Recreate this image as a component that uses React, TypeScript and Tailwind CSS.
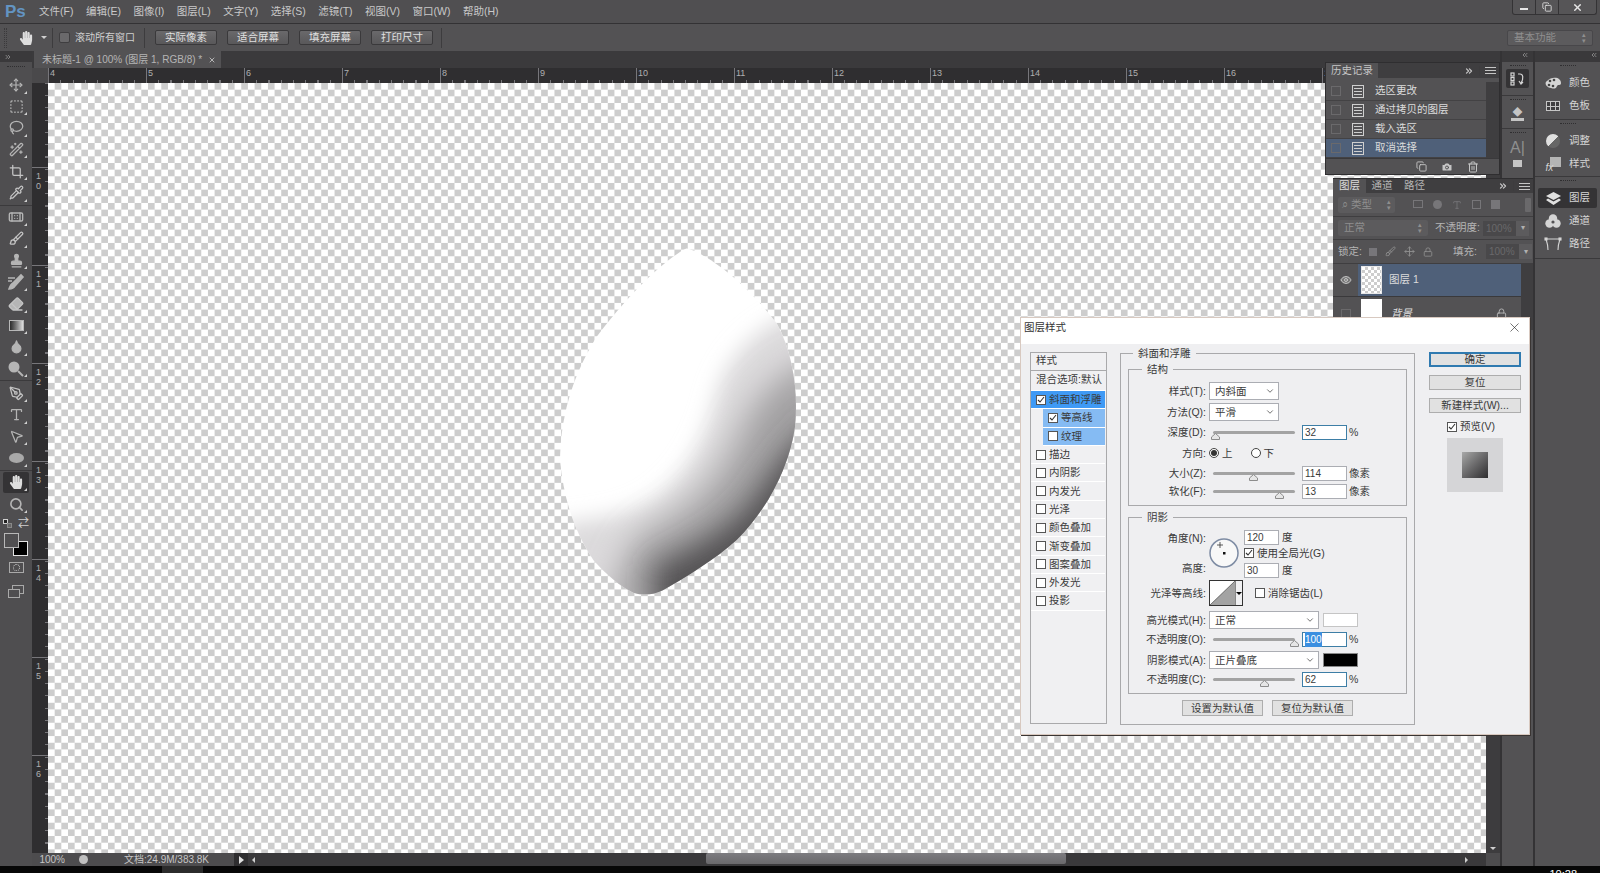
import {
  Bandage,
  Brush,
  Camera,
  ChevronDown,
  ChevronsLeft,
  ChevronsRight,
  Copy,
  Crop,
  Droplet,
  Eraser,
  Eye,
  Lasso,
  Lock,
  MousePointer2,
  Move,
  PenTool,
  Pipette,
  Search,
  SquareDashed,
  Stamp,
  Trash2,
  Type,
  WandSparkles,
  X,
} from "lucide-react";
import { FaHandPaper } from "react-icons/fa";
import type { ReactNode } from "react";

const menus = ["文件(F)", "编辑(E)", "图像(I)", "图层(L)", "文字(Y)", "选择(S)", "滤镜(T)", "视图(V)", "窗口(W)", "帮助(H)"];
const optionButtons = ["实际像素", "适合屏幕", "填充屏幕", "打印尺寸"];
const hRuler = ["4", "5", "6", "7", "8", "9", "10", "11", "12", "13", "14", "15", "16", "17", "18"];
const vRuler = ["10", "11", "12", "13", "14", "15", "16"];
const historyRows = ["选区更改", "通过拷贝的图层", "载入选区", "取消选择"];
const checkerboard =
  "bg-[conic-gradient(#cdcdcd_25%,#ffffff_0_50%,#cdcdcd_0_75%,#ffffff_0)] bg-[length:13.34px_13.34px]";

function Dodge() {
  return (
    <svg width="18" height="18" viewBox="0 0 18 18">
      <circle cx="7" cy="7" r="5.5" fill="#b5b5b5" />
      <path d="M11 11l5 5" stroke="#b5b5b5" strokeWidth="2" />
    </svg>
  );
}

function HistoryBrush() {
  return (
    <svg width="18" height="18" viewBox="0 0 18 18" fill="none" stroke="#b5b5b5" strokeWidth="1.6">
      <path d="M2 16c3 0 5-1 6-3l8-9-2-2-8 8c-2 1-3 3-4 6z" fill="#b5b5b5" />
      <path d="M1 5h7M1 8h4" />
    </svg>
  );
}

function Gradient() {
  return <div className="h-[11px] w-[15px] border border-[#b8b8b8] bg-gradient-to-r from-[#2b2b2b] to-[#e0e0e0]" />;
}

function Shape() {
  return <div className="h-[10px] w-[15px] rounded-[50%] bg-[#a9a9a9]" />;
}

function HistoryDoc() {
  return (
    <svg width="12" height="13" viewBox="0 0 12 13" fill="none" stroke="#cfcfcf">
      <rect x=".5" y=".5" width="11" height="12" />
      <path d="M2 3.5h8M2 6.5h8M2 9.5h8" />
    </svg>
  );
}

type Tool = { icon: ReactNode; active?: boolean; rule?: boolean };

const tools: Tool[] = [
  { icon: <Move size={14} color="#b5b5b5" /> },
  { icon: <SquareDashed size={15} color="#b5b5b5" /> },
  { icon: <Lasso size={15} color="#b5b5b5" /> },
  { icon: <WandSparkles size={15} color="#b5b5b5" /> },
  { icon: <Crop size={15} color="#c5c5c5" /> },
  { icon: <Pipette size={15} color="#c5c5c5" />, rule: true },
  { icon: <Bandage size={16} color="#b5b5b5" /> },
  { icon: <Brush size={15} color="#c5c5c5" /> },
  { icon: <Stamp size={15} color="#b5b5b5" fill="#b5b5b5" /> },
  { icon: <HistoryBrush /> },
  { icon: <Eraser size={16} color="#c5c5c5" fill="#b5b5b5" /> },
  { icon: <Gradient /> },
  { icon: <Droplet size={15} color="#b5b5b5" fill="#b5b5b5" /> },
  { icon: <Dodge />, rule: true },
  { icon: <PenTool size={15} color="#c5c5c5" /> },
  { icon: <Type size={15} color="#b5b5b5" /> },
  { icon: <MousePointer2 size={15} color="#b5b5b5" fill="#444" /> },
  { icon: <Shape />, rule: true },
  { icon: <FaHandPaper size={14} color="#dedede" />, active: true },
  { icon: <Search size={15} color="#b5b5b5" strokeWidth={2.6} /> },
];

function MenuBar() {
  return (
    <div className="flex h-[23px] items-center bg-[#504f51]">
      <span className="ml-[5px] w-[34px] text-[17px] font-bold leading-none text-[#6394c2]">Ps</span>
      <div className="flex gap-[12.5px] text-[10.5px] text-[#c9c9c9]">
        {menus.map((m) => (
          <span key={m}>{m}</span>
        ))}
      </div>
      <div className="ml-auto mr-[3px] flex h-[15px] w-[85px] self-start rounded-b-[3px] border border-t-0 border-[#343335] bg-[#565557] text-[#e6e6e6]">
        <div className="flex w-[23px] items-center justify-center border-r border-[#343335]">
          <div className="mt-[3px] h-[2px] w-[8px] bg-[#e6e6e6]" />
        </div>
        <div className="flex w-[23px] items-center justify-center border-r border-[#343335]">
          <Copy size={10} strokeWidth={2} />
        </div>
        <div className="flex flex-1 items-center justify-center">
          <X size={11} strokeWidth={3} />
        </div>
      </div>
    </div>
  );
}

function OptionsBar() {
  return (
    <div className="flex h-[28px] items-center border-t border-[#333234] bg-[#535254] text-[10.5px] text-[#d0d0d0]">
      <div className="ml-[4px] h-[20px] w-[3px] border-x border-dotted border-[#3a393b]" />
      <FaHandPaper size={14} color="#dedede" className="ml-[12px]" />
      <div className="ml-[8px] h-0 w-0 border-x-[3px] border-t-[3px] border-x-transparent border-t-[#cfcfcf]" />
      <div className="ml-[5px] h-[20px] w-px bg-[#3d3c3e]" />
      <div className="ml-[6px] h-[11px] w-[11px] rounded-[2px] border border-[#3f3e40] bg-[#6a696b]" />
      <span className="ml-[5px] w-[69px] whitespace-nowrap text-[10px]">滚动所有窗口</span>
      <div className="h-[20px] w-px bg-[#3d3c3e]" />
      <div className="ml-[10px] flex gap-[10px]">
        {optionButtons.map((b) => (
          <div
            key={b}
            className="flex h-[15px] w-[62px] items-center justify-center rounded-[2px] border border-[#3a393b] bg-gradient-to-b from-[#6a696b] to-[#59585a] text-[#e0e0e0]"
          >
            {b}
          </div>
        ))}
      </div>
      <div className="ml-[8px] h-[20px] w-px bg-[#3d3c3e]" />
      <div className="ml-auto mr-[7px] flex h-[16px] w-[86px] items-center justify-between rounded-[2px] border border-[#48474a] bg-[#5c5b5d] px-[6px] text-[10.5px] text-[#8f8f8f]">
        基本功能
        <span className="text-[7px] leading-[6px]">
          ▴
          <br />▾
        </span>
      </div>
    </div>
  );
}

function Toolbar() {
  return (
    <div className="flex w-[32px] shrink-0 flex-col bg-[#4f4e50]">
      <div className="flex h-[11px] items-center bg-[#3a393b] pl-[4px] text-[#a9a9a9]">
        <ChevronsRight size={8} />
      </div>
      <div className="mx-auto mt-[4px] h-[2px] w-[18px] border-t border-dotted border-[#2f2e30]" />
      <div className="mt-[6px] flex flex-col">
        {tools.map((t, i) => (
          <div key={i}>
            <div
              className={`relative mx-[3px] flex h-[21.6px] items-center justify-center rounded-[2px] ${
                t.active ? "bg-[#343335]" : ""
              }`}
            >
              {t.icon}
              <div className="absolute bottom-[2px] right-[2px] h-0 w-0 border-b-[3px] border-l-[3px] border-b-[#d0d0d0] border-l-transparent" />
            </div>
            {t.rule && <div className="my-px h-px bg-[#3b3a3c]" />}
          </div>
        ))}
      </div>
      <div className="relative mt-[3px] h-[42px]">
        <div className="absolute left-[3px] top-[1px] h-[5px] w-[5px] border border-[#d0d0d0] bg-[#222]" />
        <div className="absolute left-[7px] top-[5px] h-[5px] w-[5px] border border-[#888] bg-[#666]" />
        <span className="absolute left-[18px] top-0 text-[11px] leading-[11px] text-[#d0d0d0]">⇄</span>
        <div className="absolute left-[13px] top-[23px] h-[15px] w-[15px] border border-[#e4e4e4] bg-black" />
        <div className="absolute left-[4px] top-[15px] h-[15px] w-[15px] border border-[#b8b8b8] bg-[#504f51]" />
      </div>
      <div className="mx-auto mt-[2px] flex h-[11px] w-[15px] items-center justify-center border border-[#a9a9a9]">
        <div className="h-[7px] w-[7px] rounded-full border border-dotted border-[#c5c5c5]" />
      </div>
      <div className="relative mx-auto mt-[12px] h-[13px] w-[16px]">
        <div className="absolute right-0 top-0 h-[9px] w-[12px] border border-[#a9a9a9]" />
        <div className="absolute bottom-0 left-0 h-[9px] w-[12px] border border-[#a9a9a9] bg-[#4f4e50]" />
      </div>
    </div>
  );
}

function Petal() {
  return (
    <svg width="280" height="380" viewBox="0 0 840 1140" className="block">
      <defs>
        <clipPath id="petal">
          <path d="M470 55 C530 70 650 160 740 280 C790 370 805 490 795 590 C780 700 720 830 620 930 C560 985 470 1040 400 1080 C370 1095 340 1098 310 1088 C270 1070 225 1030 190 990 C130 900 100 800 90 690 C92 570 120 450 200 320 C290 200 400 90 470 55 Z" />
        </clipPath>
        <filter id="soft" x="-30%" y="-30%" width="160%" height="160%">
          <feGaussianBlur stdDeviation="32" />
        </filter>
        <filter id="softer" x="-30%" y="-30%" width="160%" height="160%">
          <feGaussianBlur stdDeviation="48" />
        </filter>
        <filter id="softest" x="-30%" y="-30%" width="160%" height="160%">
          <feGaussianBlur stdDeviation="42" />
        </filter>
      </defs>
      <g clipPath="url(#petal)">
        <rect width="840" height="1140" fill="#ffffff" />
        <path
          d="M790 250 C670 300 590 390 560 490 C530 620 470 750 350 820 C280 855 200 870 90 880 L120 1180 L900 1180 L900 250 Z"
          fill="#dcdadc"
          filter="url(#soft)"
        />
        <path
          d="M880 380 C770 410 680 490 630 610 C580 730 500 830 380 890 C320 920 280 960 240 1150 L900 1180 Z"
          fill="#a3a1a3"
          filter="url(#softer)"
        />
        <path
          d="M880 560 C800 620 740 700 680 790 C610 890 510 940 370 1010 L370 1180 L900 1180 Z"
          fill="#545254"
          filter="url(#softest)"
        />
      </g>
    </svg>
  );
}

function DocArea() {
  return (
    <div className="flex min-w-0 flex-1 flex-col">
      <div className="flex h-[17px] items-end bg-[#3b3a3c] pl-[2px]">
        <div className="flex h-[17px] w-[187px] items-center justify-between whitespace-nowrap bg-[#535254] pl-[8px] pr-[5px] text-[10px] text-[#b5b5b5]">
          未标题-1 @ 100% (图层 1, RGB/8) *
          <X size={8} strokeWidth={3} />
        </div>
      </div>
      <div className="flex h-[15px] bg-[#2f2e30]">
        <div className="h-[15px] w-[16px] shrink-0 bg-[#4a494b]" />
        <div className="flex flex-1 overflow-hidden bg-[repeating-linear-gradient(90deg,#77767a_0_1px,transparent_1px_12.25px)] bg-[length:100%_3px] bg-bottom bg-no-repeat">
          {hRuler.map((n) => (
            <div key={n} className="h-[15px] w-[98px] shrink-0 border-l border-[#77767a] pl-px text-[9px] leading-[11px] text-[#b0b0b0]">
              {n}
            </div>
          ))}
        </div>
      </div>
      <div className="flex min-h-0 flex-1">
        <div className="flex w-[16px] shrink-0 flex-col overflow-hidden bg-[#2f2e30] bg-[repeating-linear-gradient(180deg,#77767a_0_1px,transparent_1px_12.25px)] bg-[length:3px_100%] bg-right bg-no-repeat">
          <div className="h-[84px] shrink-0" />
          {vRuler.map((n) => (
            <div key={n} className="h-[98px] shrink-0 border-t border-[#77767a] pl-[4px] pt-[3px] text-[9px] leading-[10px] text-[#b0b0b0]">
              {n.split("").map((c, i) => (
                <div key={i}>{c}</div>
              ))}
            </div>
          ))}
        </div>
        <div className={`flex min-w-0 flex-1 ${checkerboard}`}>
          <div className="ml-[482px] mt-[147px] h-fit">
            <Petal />
          </div>
        </div>
        <div className="flex w-[14px] shrink-0 flex-col justify-end bg-[#3d3c3e] pb-[3px]">
          <div className="mx-auto h-0 w-0 border-x-[3px] border-t-[3px] border-x-transparent border-t-[#d0d0d0]" />
        </div>
      </div>
      <StatusBar />
    </div>
  );
}

function StatusBar() {
  return (
    <div className="flex h-[13px] items-center whitespace-nowrap bg-[#3a393b] text-[10px] text-[#c5c5c5]">
      <div className="flex h-full w-[33px] items-center justify-end bg-[#4d4c4e]">100%</div>
      <div className="flex h-full w-[24px] items-center justify-end bg-[#4d4c4e] pr-px">
        <div className="h-[9px] w-[9px] rounded-full bg-[#c0c0c0]" />
      </div>
      <div className="flex h-full w-[145px] items-center bg-[#4d4c4e] pl-[35px]">文档:24.9M/383.8K</div>
      <div className="flex h-full w-[14px] items-center justify-center bg-[#2f2e30]">
        <div className="h-0 w-0 border-y-[4px] border-l-[5px] border-y-transparent border-l-[#e0e0e0]" />
      </div>
      <div className="ml-[4px] h-0 w-0 border-y-[3px] border-r-[3px] border-y-transparent border-r-[#d0d0d0]" />
      <div className="ml-[451px] h-[11px] w-[360px] self-start rounded-[2px] bg-gradient-to-b from-[#7d7c80] to-[#6a696c]" />
      <div className="ml-auto mr-[18px] h-0 w-0 border-y-[3px] border-l-[3px] border-y-transparent border-l-[#d0d0d0]" />
      <div className="h-full w-[14px] bg-[#4d4c4e]" />
    </div>
  );
}

function HistoryStripIcon() {
  return (
    <svg width="16" height="14" viewBox="0 0 16 14" fill="none" stroke="#d5d5d5" strokeWidth="1.2">
      <rect x="1" y="1" width="3" height="3" />
      <rect x="1" y="5.5" width="3" height="3" />
      <rect x="1" y="10" width="3" height="3" />
      <path d="M8 2h2c3 0 4 4 1 9M9 9l2 3 2-2" />
    </svg>
  );
}

function PanelStrip() {
  return (
    <div className="flex w-[35px] shrink-0 flex-col border-x-2 border-[#343335] bg-[#535254]">
      <div className="flex h-[11px] justify-end bg-[#3a393b] pr-[4px] text-[#a9a9a9]">
        <ChevronsLeft size={8} />
      </div>
      <div className="h-[34px] border-b border-[#3a393b] pt-[3px]">
        <div className="mx-auto mb-[3px] h-px w-[16px] border-t border-dotted border-[#2f2e30]" />
        <div className="mx-[4px] flex h-[19px] items-center justify-center rounded-[2px] bg-[#343335]">
          <HistoryStripIcon />
        </div>
      </div>
      <div className="h-[33px] border-b border-[#3a393b] pt-[3px]">
        <div className="mx-auto mb-[7px] h-px w-[16px] border-t border-dotted border-[#2f2e30]" />
        <div className="mx-auto h-[14px] w-[13px] border-b-[3px] border-[#c5c5c5] text-center text-[10px] leading-[11px] text-[#c5c5c5]">
          ◆
        </div>
      </div>
      <div className="h-[46px] pt-[3px]">
        <div className="mx-auto mb-[6px] h-px w-[16px] border-t border-dotted border-[#2f2e30]" />
        <div className="text-center text-[16px] leading-[18px] text-[#8f8f8f]">A|</div>
        <div className="mx-auto mt-[3px] h-[7px] w-[9px] bg-[#c5c5c5]" />
      </div>
    </div>
  );
}

function Palette() {
  return (
    <svg width="16" height="14" viewBox="0 0 16 14">
      <path d="M8 2c4-1 8 1 8 5 0 3-3 1-4 3-1 3-3 3-6 2C1 11-1 7 2 5c2-2 4-3 6-3z" fill="#d5d5d5" />
      <circle cx="5" cy="5" r="1.3" fill="#444" />
      <circle cx="9" cy="4" r="1.3" fill="#444" />
      <circle cx="4" cy="9" r="1.3" fill="#444" />
      <circle cx="8" cy="10" r="1.3" fill="#444" />
    </svg>
  );
}

function Swatches() {
  return (
    <div className="grid h-[10px] w-[14px] grid-cols-3 gap-px border border-[#c5c5c5] bg-[#c5c5c5]">
      {[0, 1, 2, 3, 4, 5].map((i) => (
        <div key={i} className="bg-[#3f3e40]" />
      ))}
    </div>
  );
}

function Adjust() {
  return <div className="h-[14px] w-[14px] rounded-full bg-[linear-gradient(135deg,#e0e0e0_50%,#666_50%)]" />;
}

function Fx() {
  return (
    <div className="relative h-[14px] w-[15px]">
      <div className="ml-[4px] h-[10px] w-[11px] bg-[#b5b5b5]" />
      <span className="absolute bottom-[-2px] left-0 text-[10px] italic leading-[11px] text-[#d5d5d5]">fx</span>
    </div>
  );
}

function LayersGlyph() {
  return (
    <svg width="15" height="13" viewBox="0 0 15 13" fill="#e0e0e0">
      <path d="M7.5 0L15 4 7.5 8 0 4z" />
      <path d="M2 6.5L7.5 9.5 13 6.5 15 8 7.5 13 0 8z" />
    </svg>
  );
}

function Channels() {
  return (
    <svg width="16" height="14" viewBox="0 0 16 14" fill="#d5d5d5">
      <circle cx="8" cy="4.5" r="4.2" />
      <circle cx="4.5" cy="9.5" r="4.2" />
      <circle cx="11.5" cy="9.5" r="4.2" />
      <circle cx="8" cy="8" r="1.6" fill="#535254" />
    </svg>
  );
}

function Paths() {
  return (
    <svg width="18" height="14" viewBox="0 0 18 14" fill="none" stroke="#d5d5d5" strokeWidth="1.1">
      <path d="M2 2h14M4 13C4 8 3 5 2 2M14 13c0-5 1-8 2-11" />
      <rect x="1" y="1" width="2" height="2" fill="#d5d5d5" />
      <rect x="15" y="1" width="2" height="2" fill="#d5d5d5" />
    </svg>
  );
}

function DockItem({ icon, label, active }: { icon: ReactNode; label: string; active?: boolean }) {
  return (
    <div
      className={`mx-[3px] flex h-[20px] items-center rounded-[2px] pl-[5px] text-[10.5px] text-[#d5d5d5] ${
        active ? "bg-[#343335]" : ""
      }`}
    >
      <div className="flex w-[20px] justify-center">{icon}</div>
      <span className="ml-[6px]">{label}</span>
    </div>
  );
}

function DockGroup({ children, className }: { children: ReactNode; className: string }) {
  return (
    <div className={`flex flex-col gap-[3px] border-b border-[#3a393b] pt-[3px] ${className}`}>
      <div className="mx-auto mb-[4px] h-px w-[16px] border-t border-dotted border-[#2f2e30]" />
      {children}
    </div>
  );
}

function Dock() {
  return (
    <div className="flex w-[65px] shrink-0 flex-col bg-[#535254]">
      <div className="flex h-[11px] justify-end bg-[#3a393b] pr-[2px] text-[#a9a9a9]">
        <ChevronsLeft size={8} />
      </div>
      <DockGroup className="h-[58px]">
        <DockItem icon={<Palette />} label="颜色" />
        <DockItem icon={<Swatches />} label="色板" />
      </DockGroup>
      <DockGroup className="h-[57px]">
        <DockItem icon={<Adjust />} label="调整" />
        <DockItem icon={<Fx />} label="样式" />
      </DockGroup>
      <DockGroup className="h-[82px]">
        <DockItem icon={<LayersGlyph />} label="图层" active />
        <DockItem icon={<Channels />} label="通道" />
        <DockItem icon={<Paths />} label="路径" />
      </DockGroup>
    </div>
  );
}

function PanelMenuIcons() {
  return (
    <div className="ml-auto flex items-center gap-[5px] pr-[3px] text-[#c5c5c5]">
      <ChevronsRight size={10} strokeWidth={3} />
      <div className="h-[10px] w-px bg-[#3d3c3e]" />
      <div className="h-[7px] w-[11px] border-y border-[#c5c5c5] bg-[linear-gradient(#c5c5c5,#c5c5c5)] bg-[length:100%_1px] bg-center bg-no-repeat" />
    </div>
  );
}

function HistoryPanel() {
  return (
    <div className="absolute left-[1325px] top-[62px] flex h-[113px] w-[175px] flex-col border border-[#2f2e30] bg-[#535254] text-[10.5px] text-[#dcdcdc]">
      <div className="flex h-[15px] shrink-0 bg-[#3f3e40]">
        <div className="flex w-[52px] items-center justify-center bg-[#535254] text-[#c5c5c5]">历史记录</div>
        <PanelMenuIcons />
      </div>
      <div className="flex flex-1 pt-[4px]">
        <div className="flex flex-1 flex-col">
          {historyRows.map((r, i) => (
            <div
              key={r}
              className={`flex h-[19px] items-center border-b border-[#434244] ${i === 3 ? "bg-[#4f6079]" : ""}`}
            >
              <div className="ml-[5px] h-[10px] w-[10px] border border-[#6a696b]" />
              <div className="ml-[11px] flex">
                <HistoryDoc />
              </div>
              <span className="ml-[11px]">{r}</span>
            </div>
          ))}
        </div>
        <div className="w-[13px] bg-[#3f3e40]" />
      </div>
      <div className="flex h-[16px] shrink-0 items-center gap-[14px] border-t border-[#3a393b] pl-[90px] text-[#c5c5c5]">
        <Copy size={11} />
        <Camera size={12} fill="#c5c5c5" color="#535254" />
        <Trash2 size={12} />
      </div>
    </div>
  );
}

function LayersPanel() {
  return (
    <div className="absolute left-[1333px] top-[178px] flex w-[200px] flex-col border-t border-[#2f2e30] bg-[#535254] text-[10.5px] text-[#b5b5b5]">
      <div className="flex h-[14px] bg-[#3f3e40]">
        <div className="flex w-[33px] items-center justify-center bg-[#535254] text-[#dcdcdc]">图层</div>
        <div className="flex w-[32px] items-center justify-center">通道</div>
        <div className="flex w-[33px] items-center justify-center">路径</div>
        <PanelMenuIcons />
      </div>
      <div className="flex h-[24px] items-center border-b border-[#3f3e40] pl-[5px] text-[#8f8f8f]">
        <div className="flex h-[16px] w-[57px] items-center justify-between rounded-[2px] bg-[#5c5b5d] px-[4px]">
          <span>⌕ 类型</span>
          <span className="text-[7px] leading-[6px]">
            ▴
            <br />▾
          </span>
        </div>
        <div className="ml-[18px] flex gap-[10px] text-[#777679]">
          <div className="h-[8px] w-[10px] border border-[#777679]" />
          <div className="h-[9px] w-[9px] rounded-full bg-[#777679]" />
          <Type size={10} />
          <div className="h-[9px] w-[9px] border border-[#777679]" />
          <div className="h-[9px] w-[9px] bg-[#777679]" />
        </div>
        <div className="ml-auto mr-[2px] h-[14px] w-[6px] rounded-[1px] bg-[#6a696b]" />
      </div>
      <div className="flex h-[23px] items-center border-b border-[#3f3e40] pl-[5px]">
        <div className="flex h-[16px] w-[90px] items-center justify-between rounded-[2px] bg-[#5c5b5d] px-[6px] text-[#8f8f8f]">
          正常
          <span className="text-[7px] leading-[6px]">
            ▴
            <br />▾
          </span>
        </div>
        <span className="ml-[7px] w-[48px] whitespace-nowrap">不透明度:</span>
        <div className="flex h-[15px] w-[46px] items-center justify-between bg-[#49484a] pl-[3px] text-[10px] text-[#6a696b]">
          100%
          <div className="flex h-full w-[13px] items-center justify-center bg-[#5c5b5d] text-[8px] text-[#b0b0b0]">▾</div>
        </div>
      </div>
      <div className="flex h-[24px] items-center border-b border-[#3f3e40] pl-[5px]">
        <span className="w-[31px] whitespace-nowrap">锁定:</span>
        <div className="flex items-center gap-[8px] text-[#8f8f8f]">
          <div className="h-[8px] w-[8px] bg-[#77767a]" />
          <Brush size={11} />
          <Move size={11} />
          <Lock size={10} />
        </div>
        <span className="ml-[20px] w-[33px] whitespace-nowrap">填充:</span>
        <div className="flex h-[15px] w-[46px] items-center justify-between bg-[#49484a] pl-[3px] text-[10px] text-[#6a696b]">
          100%
          <div className="flex h-full w-[13px] items-center justify-center bg-[#5c5b5d] text-[8px] text-[#b0b0b0]">▾</div>
        </div>
      </div>
      <div className="flex">
        <div className="flex-1">
          <div className="flex h-[33px] items-center border-b border-[#3a393b]">
            <div className="flex h-full w-[25px] items-center justify-center">
              <Eye size={12} color="#c5c5c5" fill="#777" />
            </div>
            <div className="flex h-full flex-1 items-center bg-[#4f6079] pl-[3px] text-[#dcdcdc]">
              <div className="h-[28px] w-[21px] border border-[#e8e8e8] bg-[conic-gradient(#cdcdcd_25%,#ffffff_0_50%,#cdcdcd_0_75%,#ffffff_0)] bg-[length:6px_6px]" />
              <span className="ml-[7px]">图层 1</span>
            </div>
          </div>
          <div className="flex h-[33px] items-center">
            <div className="ml-[8px] h-[10px] w-[10px] border border-[#6a696b]" />
            <div className="ml-[10px] h-[30px] w-[21px] bg-white" />
            <span className="ml-[9px] italic text-[#e0e0e0]">背景</span>
            <Lock size={11} className="ml-auto mr-[14px]" />
          </div>
        </div>
        <div className="w-[12px] bg-[#3f3e40]" />
      </div>
    </div>
  );
}

function Check({ checked }: { checked?: boolean }) {
  return (
    <div className="flex h-[10px] w-[10px] shrink-0 items-center justify-center border border-[#555] bg-white">
      {checked && (
        <svg width="8" height="8" viewBox="0 0 8 8" fill="none" stroke="#333" strokeWidth="1.1">
          <path d="M1 4l2 2 4-5" />
        </svg>
      )}
    </div>
  );
}

function StyleRow({ label, checked, tone, indent }: { label: string; checked?: boolean; tone?: string; indent?: boolean }) {
  return (
    <div className={`h-[18.3px] pr-px ${indent ? "pl-[12px]" : ""}`}>
      <div className={`flex h-full items-center gap-[3px] whitespace-nowrap border-b border-white pl-[5px] ${tone ?? ""}`}>
        <Check checked={checked} />
        {label}
      </div>
    </div>
  );
}

function Label({ children }: { children: ReactNode }) {
  return <div className="w-[76px] shrink-0 whitespace-nowrap text-right">{children}</div>;
}

function Select({ value, w }: { value: string; w: string }) {
  return (
    <div className={`flex h-[18px] items-center justify-between border border-[#abadb3] bg-white pl-[5px] pr-[3px] ${w}`}>
      {value}
      <ChevronDown size={10} color="#555" />
    </div>
  );
}

function Field({ value, focus, selected, w }: { value: string; focus?: boolean; selected?: boolean; w: string }) {
  return (
    <div
      className={`flex h-[15px] items-center border bg-white pl-[2px] text-[10px] ${w} ${
        focus ? "border-[#3d7ea6]" : "border-[#abadb3]"
      }`}
    >
      <span className={selected ? "bg-[#3b8fe0] text-white" : ""}>{value}</span>
    </div>
  );
}

function SliderRow({
  label,
  pos,
  value,
  unit,
  focus,
  selected,
  className,
}: {
  label: string;
  pos: number;
  value: string;
  unit: string;
  focus?: boolean;
  selected?: boolean;
  className: string;
}) {
  return (
    <div className={`flex h-[15px] items-center ${className}`}>
      <Label>{label}</Label>
      <div className="relative ml-[7px] h-[3px] w-[82px] rounded-full bg-[#a3a3a3]">
        <svg width="9" height="7" viewBox="0 0 9 7" className="absolute top-[2px] -ml-[4px]" style={{ left: `${pos}%` }}>
          <path d="M4.5 .5L8.5 4v2.5H.5V4z" fill="#e6e6e6" stroke="#8c8c8c" />
        </svg>
      </div>
      <div className="ml-[7px]">
        <Field value={value} focus={focus} selected={selected} w="w-[45px]" />
      </div>
      <span className="ml-[2px]">{unit}</span>
    </div>
  );
}

function Group({ title, className, children }: { title: string; className: string; children: ReactNode }) {
  return (
    <fieldset className={`border border-[#a9a9ab] ${className}`}>
      <legend className="ml-[12px] px-[5px] text-[10.5px] leading-[14px]">{title}</legend>
      {children}
    </fieldset>
  );
}

function Structure() {
  return (
    <Group title="结构" className="mx-[7px] mt-[2px] h-[144px] px-px">
      <div className="flex items-center gap-[3px] pt-[6px]">
        <Label>样式(T):</Label>
        <Select value="内斜面" w="w-[70px]" />
      </div>
      <div className="mt-[3px] flex items-center gap-[3px]">
        <Label>方法(Q):</Label>
        <Select value="平滑" w="w-[70px]" />
      </div>
      <SliderRow label="深度(D):" pos={2} value="32" unit="%" focus className="mt-[4px]" />
      <div className="mt-[5px] flex h-[16px] items-center gap-[3px]">
        <Label>方向:</Label>
        <div className="flex h-[10px] w-[10px] items-center justify-center rounded-full border border-[#444] bg-white">
          <div className="h-[6px] w-[6px] rounded-full bg-[#333]" />
        </div>
        <span>上</span>
        <div className="ml-[15px] h-[10px] w-[10px] rounded-full border border-[#444] bg-white" />
        <span>下</span>
      </div>
      <SliderRow label="大小(Z):" pos={49} value="114" unit="像素" className="mt-[5px]" />
      <SliderRow label="软化(F):" pos={80} value="13" unit="像素" className="mt-[3px]" />
    </Group>
  );
}

function AngleDial() {
  return (
    <svg width="30" height="30" viewBox="0 0 30 30">
      <circle cx="15" cy="15" r="14" fill="#f8f8f8" stroke="#7d8ba3" strokeWidth="1.5" />
      <path d="M11 4v6M8 7h6" stroke="#333" strokeWidth=".8" />
      <rect x="14" y="14" width="2.5" height="2.5" fill="#111" />
    </svg>
  );
}

function ContourBox() {
  return (
    <div className="flex h-[26px] w-[34px] border border-[#333] bg-white">
      <svg width="25" height="24" viewBox="0 0 25 24">
        <path d="M0 24L25 0V24Z" fill="#a3a3a3" />
        <path d="M0 24L25 0" stroke="#333" strokeWidth=".6" />
      </svg>
      <div className="flex flex-1 items-center justify-center border-l border-[#888] bg-[#f0f0f2]">
        <div className="h-0 w-0 border-x-[3px] border-t-[3px] border-x-transparent border-t-black" />
      </div>
    </div>
  );
}

function Shading() {
  return (
    <Group title="阴影" className="mx-[7px] mt-[4px] h-[184px] px-px">
      <div className="mt-[6px] flex h-[47px]">
        <div className="flex flex-col justify-between py-px">
          <Label>角度(N):</Label>
          <Label>高度:</Label>
        </div>
        <div className="ml-[3px] mt-[8px]">
          <AngleDial />
        </div>
        <div className="ml-[5px]">
          <div className="flex items-center gap-[3px]">
            <Field value="120" w="w-[35px]" />度
          </div>
          <div className="mt-[3px] flex h-[10px] items-center gap-[3px] whitespace-nowrap">
            <Check checked />
            使用全局光(G)
          </div>
          <div className="mt-[5px] flex items-center gap-[3px]">
            <Field value="30" w="w-[35px]" />度
          </div>
        </div>
      </div>
      <div className="mt-[3px] flex items-center gap-[3px]">
        <Label>光泽等高线:</Label>
        <ContourBox />
        <div className="ml-[9px] flex items-center gap-[3px]">
          <Check />
          消除锯齿(L)
        </div>
      </div>
      <div className="mt-[5px] flex items-center gap-[3px]">
        <Label>高光模式(H):</Label>
        <Select value="正常" w="w-[110px]" />
        <div className="ml-px h-[14px] w-[35px] border border-[#c5c5c5] bg-white" />
      </div>
      <SliderRow label="不透明度(O):" pos={99} value="100" unit="%" focus selected className="mt-[3px]" />
      <div className="mt-[4px] flex items-center gap-[3px]">
        <Label>阴影模式(A):</Label>
        <Select value="正片叠底" w="w-[110px]" />
        <div className="ml-px h-[14px] w-[35px] border border-[#888] bg-black" />
      </div>
      <SliderRow label="不透明度(C):" pos={62} value="62" unit="%" focus className="mt-[3px]" />
    </Group>
  );
}

function Dialog() {
  return (
    <div className="absolute left-[1020px] top-[317px] flex h-[418px] w-[510px] flex-col border border-[#d8c9c0] bg-[#efeff1] text-[10.5px] leading-[15px] text-[#3a3a3a] shadow-[1px_1px_0_#3a3533]">
      <div className="flex h-[26px] shrink-0 items-center justify-between bg-white pb-[7px] pl-[3px] pr-[7px] text-[#333]">
        图层样式
        <X size={15} strokeWidth={1} color="#222" />
      </div>
      <div className="flex">
        <div className="ml-[9px] mt-[8px] h-[372px] w-[77px] border border-[#a9a9ab] bg-[#f0f0f2]">
          <div className="h-[18px] border-b border-[#a9a9ab] pl-[5px]">样式</div>
          <div className="flex h-[20px] items-center whitespace-nowrap border-b border-white pb-[3px] pl-[5px]">混合选项:默认</div>
          <StyleRow label="斜面和浮雕" checked tone="bg-[#3f9af5]" />
          <StyleRow label="等高线" checked tone="bg-[#85bbf3]" indent />
          <StyleRow label="纹理" tone="bg-[#85bbf3]" indent />
          {["描边", "内阴影", "内发光", "光泽", "颜色叠加", "渐变叠加", "图案叠加", "外发光", "投影"].map((s) => (
            <StyleRow key={s} label={s} />
          ))}
        </div>
        <div className="ml-[13px] mt-[2px] h-[379px] w-[295px]">
          <Group title="斜面和浮雕" className="h-[379px]">
            <Structure />
            <Shading />
            <div className="ml-[61px] mt-[6px] flex gap-[9px]">
              <div className="flex h-[16px] w-[81px] items-center justify-center border border-[#adadad] bg-[#e1e1e1]">设置为默认值</div>
              <div className="flex h-[16px] w-[81px] items-center justify-center border border-[#adadad] bg-[#e1e1e1]">复位为默认值</div>
            </div>
          </Group>
        </div>
        <div className="ml-[14px] mt-[8px] flex w-[92px] flex-col">
          <div className="flex h-[15px] items-center justify-center border-2 border-[#2f7ab0] bg-[#e1e1e1]">确定</div>
          <div className="mt-[8px] flex h-[15px] items-center justify-center border border-[#adadad] bg-[#e1e1e1]">复位</div>
          <div className="mt-[8px] flex h-[15px] items-center justify-center border border-[#adadad] bg-[#e1e1e1]">新建样式(W)...</div>
          <div className="ml-[18px] mt-[6px] flex items-center gap-[3px]">
            <Check checked />
            预览(V)
          </div>
          <div className="ml-[18px] mt-[4px] flex h-[54px] w-[56px] items-center justify-center bg-[#d5d5d7]">
            <div className="h-[26px] w-[26px] bg-gradient-to-br from-[#a9a9a9] to-[#2f2e30]" />
          </div>
        </div>
      </div>
    </div>
  );
}

export default function App() {
  return (
    <div className="relative flex h-[873px] w-[1600px] flex-col overflow-hidden bg-[#535254] font-['Liberation_Sans','Noto_Sans_CJK_SC',sans-serif]">
      <MenuBar />
      <OptionsBar />
      <div className="flex min-h-0 flex-1">
        <Toolbar />
        <DocArea />
        <PanelStrip />
        <Dock />
      </div>
      <div className="flex h-[7px] overflow-hidden bg-[#070707] text-[11px] leading-[10px] text-white">
        <div className="ml-[162px] h-full w-[41px] bg-[#2b2b2b]" />
        <span className="ml-auto mr-[23px] mt-[3px]">10:28</span>
      </div>
      <HistoryPanel />
      <LayersPanel />
      <Dialog />
    </div>
  );
}
